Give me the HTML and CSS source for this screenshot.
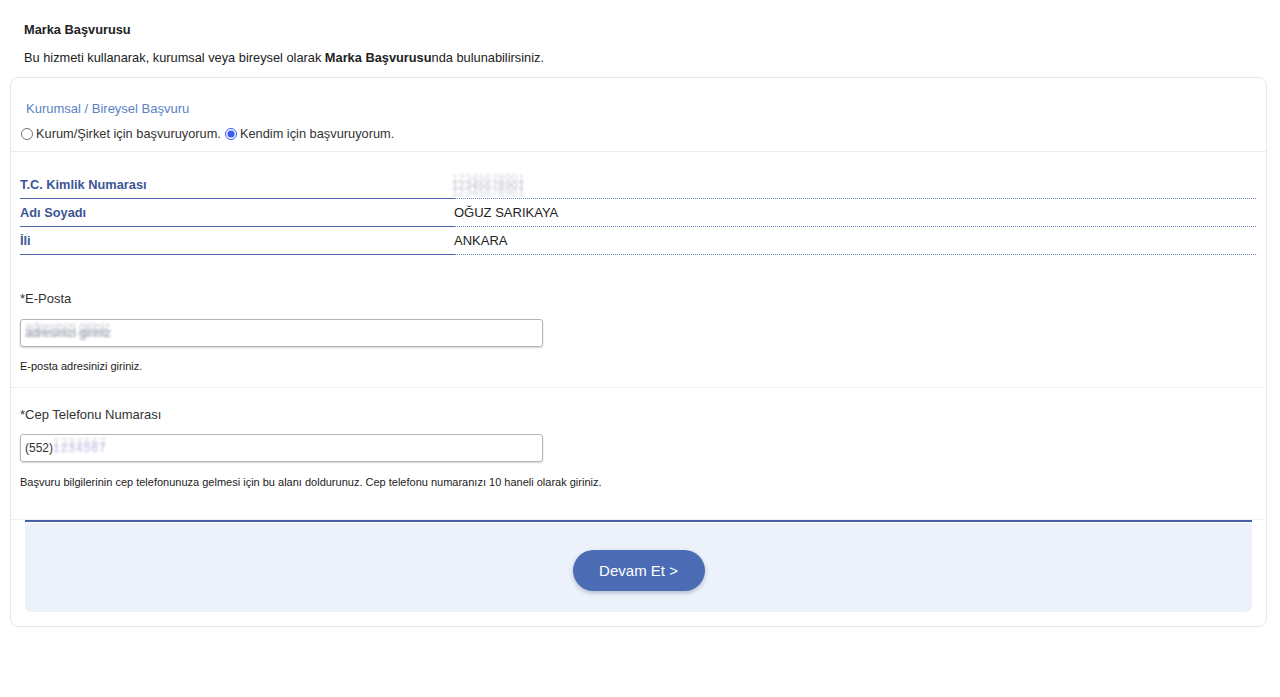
FILE: index.html
```html
<!DOCTYPE html>
<html lang="tr">
<head>
<meta charset="utf-8">
<title>Marka Başvurusu</title>
<link rel="stylesheet" href="styles.css">
</head>
<body>
<div class="page">
  <header class="intro">
    <h1 class="intro-title">Marka Başvurusu</h1>
    <p class="intro-text">Bu hizmeti kullanarak, kurumsal veya bireysel olarak <b>Marka Başvurusu</b>nda bulunabilirsiniz.</p>
  </header>

  <form class="card">
    <div class="card-head">
      <div class="kind-title">Kurumsal / Bireysel Başvuru</div>
      <div class="kind-options">
        <label class="radio"><input type="radio" name="kind"> Kurum/Şirket için başvuruyorum.</label>
        <label class="radio"><input type="radio" name="kind" checked> Kendim için başvuruyorum.</label>
      </div>
    </div>

    <div class="info">
      <div class="info-row">
        <div class="info-key">T.C. Kimlik Numarası</div>
        <div class="info-val"><span class="masked masked-id">12345678901</span></div>
      </div>
      <div class="info-row">
        <div class="info-key">Adı Soyadı</div>
        <div class="info-val">OĞUZ SARIKAYA</div>
      </div>
      <div class="info-row">
        <div class="info-key">İli</div>
        <div class="info-val">ANKARA</div>
      </div>
    </div>

    <div class="field field-mail">
      <label class="field-label">*E-Posta</label>
      <div class="field-input"><span class="masked masked-mail">adresinizi giriniz</span></div>
      <p class="field-help">E-posta adresinizi giriniz.</p>
    </div>

    <div class="field field-phone">
      <label class="field-label">*Cep Telefonu Numarası</label>
      <div class="field-input">(552)<span class="masked masked-phone">1234567</span></div>
      <p class="field-help">Başvuru bilgilerinin cep telefonunuza gelmesi için bu alanı doldurunuz. Cep telefonu numaranızı 10 haneli olarak giriniz.</p>
    </div>

    <div class="actions">
      <button type="button" class="btn-next">Devam Et &gt;</button>
    </div>
  </form>
</div>
</body>
</html>
```

FILE: styles.css
```css
* { box-sizing: border-box; }

body {
  margin: 0;
  background: #fff;
  color: #222;
  font-family: "Liberation Sans", Arial, sans-serif;
}

.page {
  padding: 0 13px 0 10px;
}

/* page heading */
.intro {
  padding: 22px 0 0 14px;
}
.intro-title {
  margin: 0;
  font-size: 12.8px;
  line-height: 16px;
  font-weight: bold;
  color: #222;
}
.intro-text {
  margin: 12px 0 0;
  font-size: 12.8px;
  line-height: 16px;
  color: #222;
}

/* form card */
.card {
  margin-top: 11px;
  border: 1px solid #e6e6e6;
  border-radius: 8px;
  padding-bottom: 14px;
  background: #fff;
}

.card-head {
  padding: 23px 10px 8px;
  border-bottom: 1px dotted #dcdcdc;
}
.kind-title {
  padding-left: 5px;
  font-size: 13px;
  line-height: 16px;
  color: #5b7fc4;
}
.kind-options {
  margin-top: 8px;
  display: flex;
  gap: 4px;
  font-size: 12.8px;
  line-height: 18px;
  color: #333;
}
.radio {
  display: flex;
  align-items: center;
  gap: 3px;
}
.radio input {
  margin: 0;
  width: 12px;
  height: 12px;
  accent-color: #3a5bf0;
}

/* applicant summary */
.info {
  margin: 19px 10px 0 9px;
}
.info-row {
  display: flex;
  height: 28px;
}
.info-key {
  width: 434px;
  display: flex;
  align-items: center;
  font-size: 12.8px;
  font-weight: bold;
  color: #3d5596;
  border-bottom: 1px solid #4a66a8;
}
.info-val {
  flex: 1;
  display: flex;
  align-items: center;
  font-size: 13px;
  color: #222;
  border-bottom: 1px dotted #6d86c4;
}

.masked {
  filter: blur(1.2px);
  color: #b8bcc8;
}
.masked-id {
  font-size: 11px;
  letter-spacing: 0.5px;
  text-shadow: 0 -7px 0 #d6d8e0, 0 7px 0 #cfd2dc;
  margin-left: -2px;
}
.masked-mail {
  color: #9aa0ac;
  text-shadow: 0 -6px 0 #c8ccd6, 2px 0 0 #d6d9e0;
}
.masked-phone {
  color: #c5b8e2;
  text-shadow: 0 -5px 0 #d8d8e4;
  letter-spacing: 1px;
}

/* input fields */
.field {
  padding: 0 10px 0 9px;
}
.field-mail {
  padding-top: 36px;
  padding-bottom: 14px;
  border-bottom: 1px dotted #e4e4e4;
}
.field-phone {
  padding-top: 19px;
  padding-bottom: 30px;
  border-bottom: 1px dotted #e4e4e4;
}
.field-label {
  display: block;
  font-size: 13px;
  line-height: 16px;
  color: #333;
}
.field-input {
  margin-top: 12px;
  width: 523px;
  height: 28px;
  border: 1px solid #b5b5b5;
  border-radius: 3px;
  box-shadow: 0 1px 2px rgba(0, 0, 0, 0.18);
  padding: 0 4px;
  display: flex;
  align-items: center;
  font-size: 12px;
  color: #333;
  overflow: hidden;
}
.field-phone .field-input {
  margin-top: 11px;
}
.field-help {
  margin: 12px 0 0;
  font-size: 11px;
  line-height: 14px;
  color: #222;
}
.field-phone .field-help {
  margin-top: 13px;
}

/* footer with submit button */
.actions {
  margin: 0 14px 0 14px;
  padding: 28px 0 21px;
  display: flex;
  justify-content: center;
  background: #edf1f9;
  border-top: 2px solid #4461a6;
  box-shadow: inset 0 1px 0 #fff;
  border-radius: 0 0 6px 6px;
}
.btn-next {
  width: 132px;
  height: 41px;
  border: none;
  border-radius: 21px;
  background: #4b6cb5;
  color: #fff;
  font-family: "Liberation Sans", Arial, sans-serif;
  font-size: 15px;
  box-shadow: 0 2px 4px rgba(40, 60, 110, 0.3);
  cursor: pointer;
}
```
